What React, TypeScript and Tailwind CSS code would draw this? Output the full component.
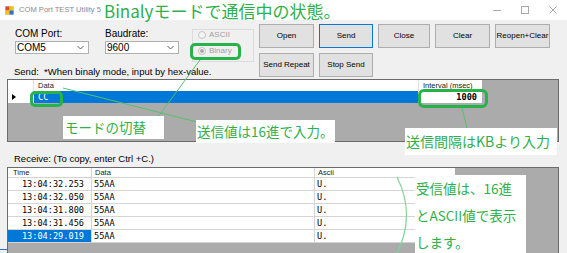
import React from "react";

const green = "text-[#2fb04a]";

const Radio = ({ label, checked }: { label: string; checked?: boolean }) => (
  <div className="flex items-center h-[9px]">
    <span className="w-[8px] h-[8px] rounded-full border border-[#c4c4c4] bg-[#f4f4f4] flex items-center justify-center">
      {checked && <span className="w-[4px] h-[4px] rounded-full bg-[#a8a8a8]" />}
    </span>
    <span className="ml-[3px] text-[8px] text-[#a0a0a0]">{label}</span>
  </div>
);

const Combo = ({ value }: { value: string }) => (
  <div className="mt-[2px] h-[13px] bg-white border border-[#b0b0b0] flex items-center justify-between pl-[1px] pr-[4px]">
    <span className="text-[10px] leading-[10px]">{value}</span>
    <svg width="7" height="5" viewBox="0 0 7 5">
      <path d="M0.5 1 L3.5 4 L6.5 1" fill="none" stroke="#606060" strokeWidth="1" />
    </svg>
  </div>
);

const Btn = ({ label, focus }: { label: string; focus?: boolean }) => (
  <button
    className={
      "h-[24px] bg-[#e1e1e1] border text-[8px] text-black flex items-center justify-center " +
      (focus ? "border-[#0078d7]" : "border-[#adadad]")
    }
  >
    {label}
  </button>
);

const rows = [
  "13:04:32.253",
  "13:04:32.050",
  "13:04:31.800",
  "13:04:31.456",
  "13:04:29.019",
];

export default function App() {
  return (
    <div className="relative w-[567px] h-[253px] overflow-hidden bg-[#f0f0f0] font-['Liberation_Sans',sans-serif] text-black">
      {/* title bar */}
      <div className="h-[20px] bg-white flex items-center">
        <svg className="ml-[5px]" width="9" height="9" viewBox="0 0 9 9">
          <rect x="0" y="0" width="9" height="9" fill="#d0d0d0" />
          <rect x="0.5" y="0.5" width="4" height="4" fill="#e8442e" />
          <rect x="4.5" y="0.5" width="4" height="4" fill="#f5c400" />
          <rect x="0.5" y="4.5" width="4" height="4" fill="#f5c400" />
          <rect x="4.5" y="4.5" width="4" height="4" fill="#2a6fd6" />
        </svg>
        <span className="ml-[5px] text-[7.6px] text-[#8a8a8a] whitespace-nowrap">COM Port TEST Utility 5</span>
        <div className="ml-auto flex items-center gap-[20px] mr-[10px] text-[#a8a8a8]">
          <span className="w-[8px] h-px bg-[#a8a8a8]" />
          <span className="w-[8px] h-[8px] border border-[#a8a8a8]" />
          <svg width="8" height="8" viewBox="0 0 8 8">
            <path d="M0.5 0.5 L7.5 7.5 M7.5 0.5 L0.5 7.5" stroke="#a8a8a8" strokeWidth="1" />
          </svg>
        </div>
      </div>

      {/* top controls */}
      <div className="flex">
        <div className="flex flex-col w-[259px]">
          <div className="flex pt-[9px] pl-[15px]">
            <div className="w-[74px]">
              <div className="text-[10px] leading-[10px]">COM Port:</div>
              <Combo value="COM5" />
            </div>
            <div className="w-[74px] ml-[16px]">
              <div className="text-[10px] leading-[10px]">Baudrate:</div>
              <Combo value="9600" />
            </div>
            <div className="ml-[13px] w-[62px] h-[33px] border border-[#dcdcdc] flex flex-col gap-[7px] pl-[5px]">
              <Radio label="ASCII" />
              <Radio label="Binary" checked />
            </div>
          </div>
          <div className="mt-[5px] pl-[14px] text-[9.5px] leading-[10px] whitespace-nowrap">
            Send:&nbsp; *When binaly mode, input by hex-value.
          </div>
        </div>
        <div className="pt-[4px] grid grid-cols-[55px_54px_52px_55px_55px] gap-x-[5px] gap-y-[4px]">
          <Btn label="Open" />
          <Btn label="Send" focus />
          <Btn label="Close" />
          <Btn label="Clear" />
          <Btn label="Reopen+Clear" />
          <Btn label="Send Repeat" />
          <Btn label="Stop Send" />
        </div>
      </div>

      {/* send grid */}
      <div className="mt-[2px] ml-[7px] w-[552px] h-[63px] border border-[#6b6b6b] bg-[#ababab] flex flex-col">
        <div className="flex h-[11px] text-[7.5px] leading-[11px] text-[#202020]">
          <div className="w-[26px] bg-white border-r border-[#e0e0e0]" />
          <div className="w-[384px] bg-white pl-[4px]">Data</div>
          <div className="w-[64px] bg-white pl-[4px] border-l border-[#e0e0e0]">Interval (msec)</div>
        </div>
        <div className="flex h-[12px] font-['DejaVu_Sans_Mono',monospace] text-[8.6px] leading-[12px]">
          <div className="w-[26px] bg-white flex items-center pl-[4px]">
            <svg width="4" height="6" viewBox="0 0 4 6">
              <path d="M0 0 L4 3 L0 6 Z" fill="#000" />
            </svg>
          </div>
          <div className="w-[384px] bg-[#0078d7] text-white pl-[4px]">CC</div>
          <div className="w-[64px] bg-white text-right pr-[5px] font-bold">1000</div>
        </div>
      </div>

      {/* receive */}
      <div className="mt-[12px] pl-[14px] text-[9.5px] leading-[10px] whitespace-nowrap">
        Receive: (To copy, enter Ctrl +C.)
      </div>
      <div className="mt-[3px] ml-[7px] w-[552px] h-[100px] border border-[#6b6b6b] bg-[#ababab] flex flex-col">
        <div className="flex h-[10px] text-[7.5px] leading-[10px] text-[#202020]">
          <div className="w-[84px] bg-white pl-[5px] border-r border-b border-[#d4d4d4]">Time</div>
          <div className="w-[223px] bg-white pl-[3px] border-r border-b border-[#d4d4d4]">Data</div>
          <div className="w-[140px] bg-white pl-[3px] border-b border-[#d4d4d4]">Ascii</div>
        </div>
        {rows.map((t, i) => (
          <div
            key={t}
            className="flex h-[13px] font-['DejaVu_Sans_Mono',monospace] text-[8.6px] leading-[12px]"
          >
            <div
              className={
                "w-[84px] text-right pr-[7px] border-r border-b border-[#d4d4d4] " +
                (i === 4 ? "bg-[#0078d7] text-white" : "bg-white")
              }
            >
              {t}
            </div>
            <div className="w-[223px] bg-white pl-[2px] border-r border-b border-[#d4d4d4]">55AA</div>
            <div className="w-[140px] bg-white pl-[2px] border-b border-[#d4d4d4]">U.</div>
          </div>
        ))}
      </div>

      {/* annotations */}
      <svg className="absolute left-0 top-0 pointer-events-none" width="567" height="253">
        <path d="M200 60 L152 125" stroke="#55c06f" strokeWidth="1" fill="none" />
        <path d="M63 88 L197 122" stroke="#55c06f" strokeWidth="1" fill="none" />
        <path d="M462 108 L467 128" stroke="#55c06f" strokeWidth="1" fill="none" />
        <path d="M397 177 Q416 215 397 253" stroke="#7fd49a" strokeWidth="1.2" fill="none" />
      </svg>

      <div className="absolute left-[190px] top-[43px] w-[51px] h-[17px] border-[3px] border-[#27b24a] rounded-[5px]" />
      <div className="absolute left-[30px] top-[91px] w-[33px] h-[16px] border-[3px] border-[#27b24a] rounded-[5px]" />
      <div className="absolute left-[418px] top-[89px] w-[70px] h-[19px] border-[3px] border-[#27b24a] rounded-[6px]" />

      <div
        className={
          "absolute left-[104px] top-[0px] text-[17px] leading-[22px] whitespace-nowrap font-['Noto_Sans_CJK_JP',sans-serif] " +
          green
        }
      >
        Binalyモードで通信中の状態。
      </div>
      <div
        className={
          "absolute left-[63px] top-[116px] w-[101px] h-[23px] bg-white pl-[2px] text-[13.5px] leading-[23px] font-['Noto_Sans_CJK_JP',sans-serif] " +
          green
        }
      >
        モードの切替
      </div>
      <div
        className={
          "absolute left-[196px] top-[120px] w-[139px] h-[23px] bg-white pl-[1px] text-[13.5px] leading-[23px] whitespace-nowrap font-['Noto_Sans_CJK_JP',sans-serif] " +
          green
        }
      >
        送信値は16進で入力。
      </div>
      <div
        className={
          "absolute left-[405px] top-[128px] w-[152px] h-[27px] bg-white pl-[1px] text-[14px] leading-[27px] whitespace-nowrap font-['Noto_Sans_CJK_JP',sans-serif] " +
          green
        }
      >
        送信間隔はKBより入力
      </div>
      <div
        className={
          "absolute left-[415px] top-[175px] w-[111px] h-[90px] bg-white pl-[1px] pt-[0px] text-[13.5px] leading-[27px] whitespace-nowrap font-['Noto_Sans_CJK_JP',sans-serif] " +
          green
        }
      >
        <div>受信値は、16進</div>
        <div>とASCII値で表示</div>
        <div>します。</div>
      </div>

      <div className="absolute left-0 top-[249px] w-[7px] h-px bg-[#2a6fd6]" />
    </div>
  );
}
